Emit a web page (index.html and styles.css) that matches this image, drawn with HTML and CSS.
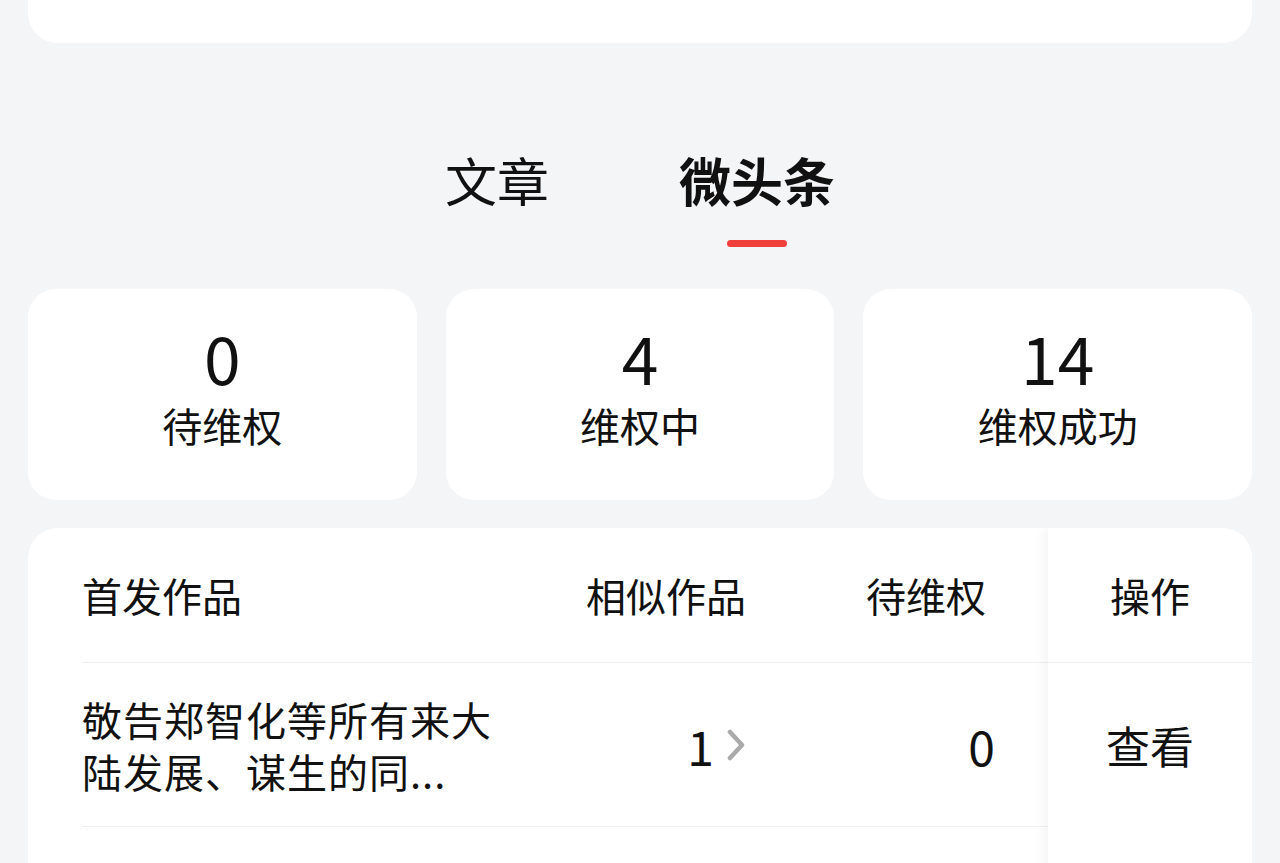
FILE: index.html
```html
<!doctype html>
<html>
    <head>
        <meta charset="utf-8">
        <link rel="stylesheet" href="styles.css">
    </head>

    <body>
    <div class="page">
        <div class="top-card"></div>

        <div class="tabs">
            <div class="tab">文章</div>
            <div class="tab active">微头条</div>
        </div>

        <div class="stats">
            <div class="stat">
                <div class="stat-num">0</div>
                <div class="stat-label">待维权</div>
            </div>
            <div class="stat">
                <div class="stat-num">4</div>
                <div class="stat-label">维权中</div>
            </div>
            <div class="stat">
                <div class="stat-num">14</div>
                <div class="stat-label">维权成功</div>
            </div>
        </div>

        <div class="table-card">
            <div class="table-main">
                <div class="row row-head">
                    <div>首发作品</div>
                    <div class="cell-num">相似作品</div>
                    <div class="cell-num head-pending">待维权</div>
                    <div></div>
                </div>
                <div class="row row-body">
                    <div class="work-title">敬告郑智化等所有来大陆发展、谋生的同...</div>
                    <div class="cell-num digits">1<svg class="chevron" viewBox="0 0 20 32" width="20" height="32"><polyline points="4,3 16,16 4,29"/></svg></div>
                    <div class="cell-num digits">0</div>
                    <div></div>
                </div>
            </div>
            <div class="table-side">
                <div class="side-head">操作</div>
                <div class="side-cell">查看</div>
            </div>
        </div>
    </div>
    </body>
</html>
```

FILE: styles.css
```css
body {
    margin: 0;
    background-color: #f4f5f7;
    font-family: "Noto Sans CJK SC", sans-serif;
    color: #111;
}
* {
    box-sizing: border-box;
}

.page {
    padding: 0 28px;
}

.top-card {
    height: 43px;
    background-color: #fff;
    border-radius: 0 0 30px 30px;
}

/* ===== Tabs ===== */
.tabs {
    display: flex;
    justify-content: center;
    align-items: flex-start;
    gap: 130px;
    margin-top: 101px;
}

.tab {
    display: flex;
    flex-direction: column;
    align-items: center;
    font-size: 52px;
    line-height: 72px;
}

.tab.active {
    font-weight: 700;
}

.tab.active::after {
    content: "";
    display: block;
    width: 60px;
    height: 7px;
    margin-top: 24px;
    border-radius: 4px;
    background-color: #f0403c;
}

/* ===== Stats ===== */
.stats {
    display: grid;
    grid-template-columns: repeat(3, 1fr);
    gap: 29px;
    margin-top: 42px;
}

.stat {
    height: 211px;
    padding-top: 32px;
    background-color: #fff;
    border-radius: 28px;
    text-align: center;
}

.stat-num {
    font-size: 66px;
    line-height: 70px;
}

.stat-label {
    font-size: 40px;
    line-height: 48px;
    margin-top: 10px;
}

/* ===== Table ===== */
.table-card {
    display: flex;
    min-height: 400px;
    margin-top: 28px;
    background-color: #fff;
    border-radius: 30px;
    overflow: hidden;
}

.table-main {
    flex: 1;
    padding-left: 54px;
}

.row {
    display: grid;
    grid-template-columns: 438px 226px 249px 1fr;
    align-items: center;
    border-bottom: 1px solid #efefef;
    font-size: 40px;
}

.row-head {
    height: 135px;
}

.row-body {
    height: 164px;
}

.cell-num {
    display: flex;
    align-items: center;
    justify-content: flex-end;
}

.head-pending {
    padding-right: 9px;
}

.digits {
    font-size: 48px;
}

.work-title {
    width: 430px;
    line-height: 52px;
    letter-spacing: 1px;
}

.chevron {
    margin-left: 12px;
    fill: none;
    stroke: #aaa;
    stroke-width: 4.5;
    stroke-linecap: round;
    stroke-linejoin: round;
}

.table-side {
    position: relative;
    width: 204px;
    background-color: #fff;
    box-shadow: -5px 0 10px rgba(0, 0, 0, 0.045);
}

.side-head {
    display: flex;
    align-items: center;
    justify-content: center;
    height: 135px;
    border-bottom: 1px solid #efefef;
    font-size: 40px;
}

.side-cell {
    display: flex;
    align-items: center;
    justify-content: center;
    height: 164px;
    font-size: 44px;
}
```
